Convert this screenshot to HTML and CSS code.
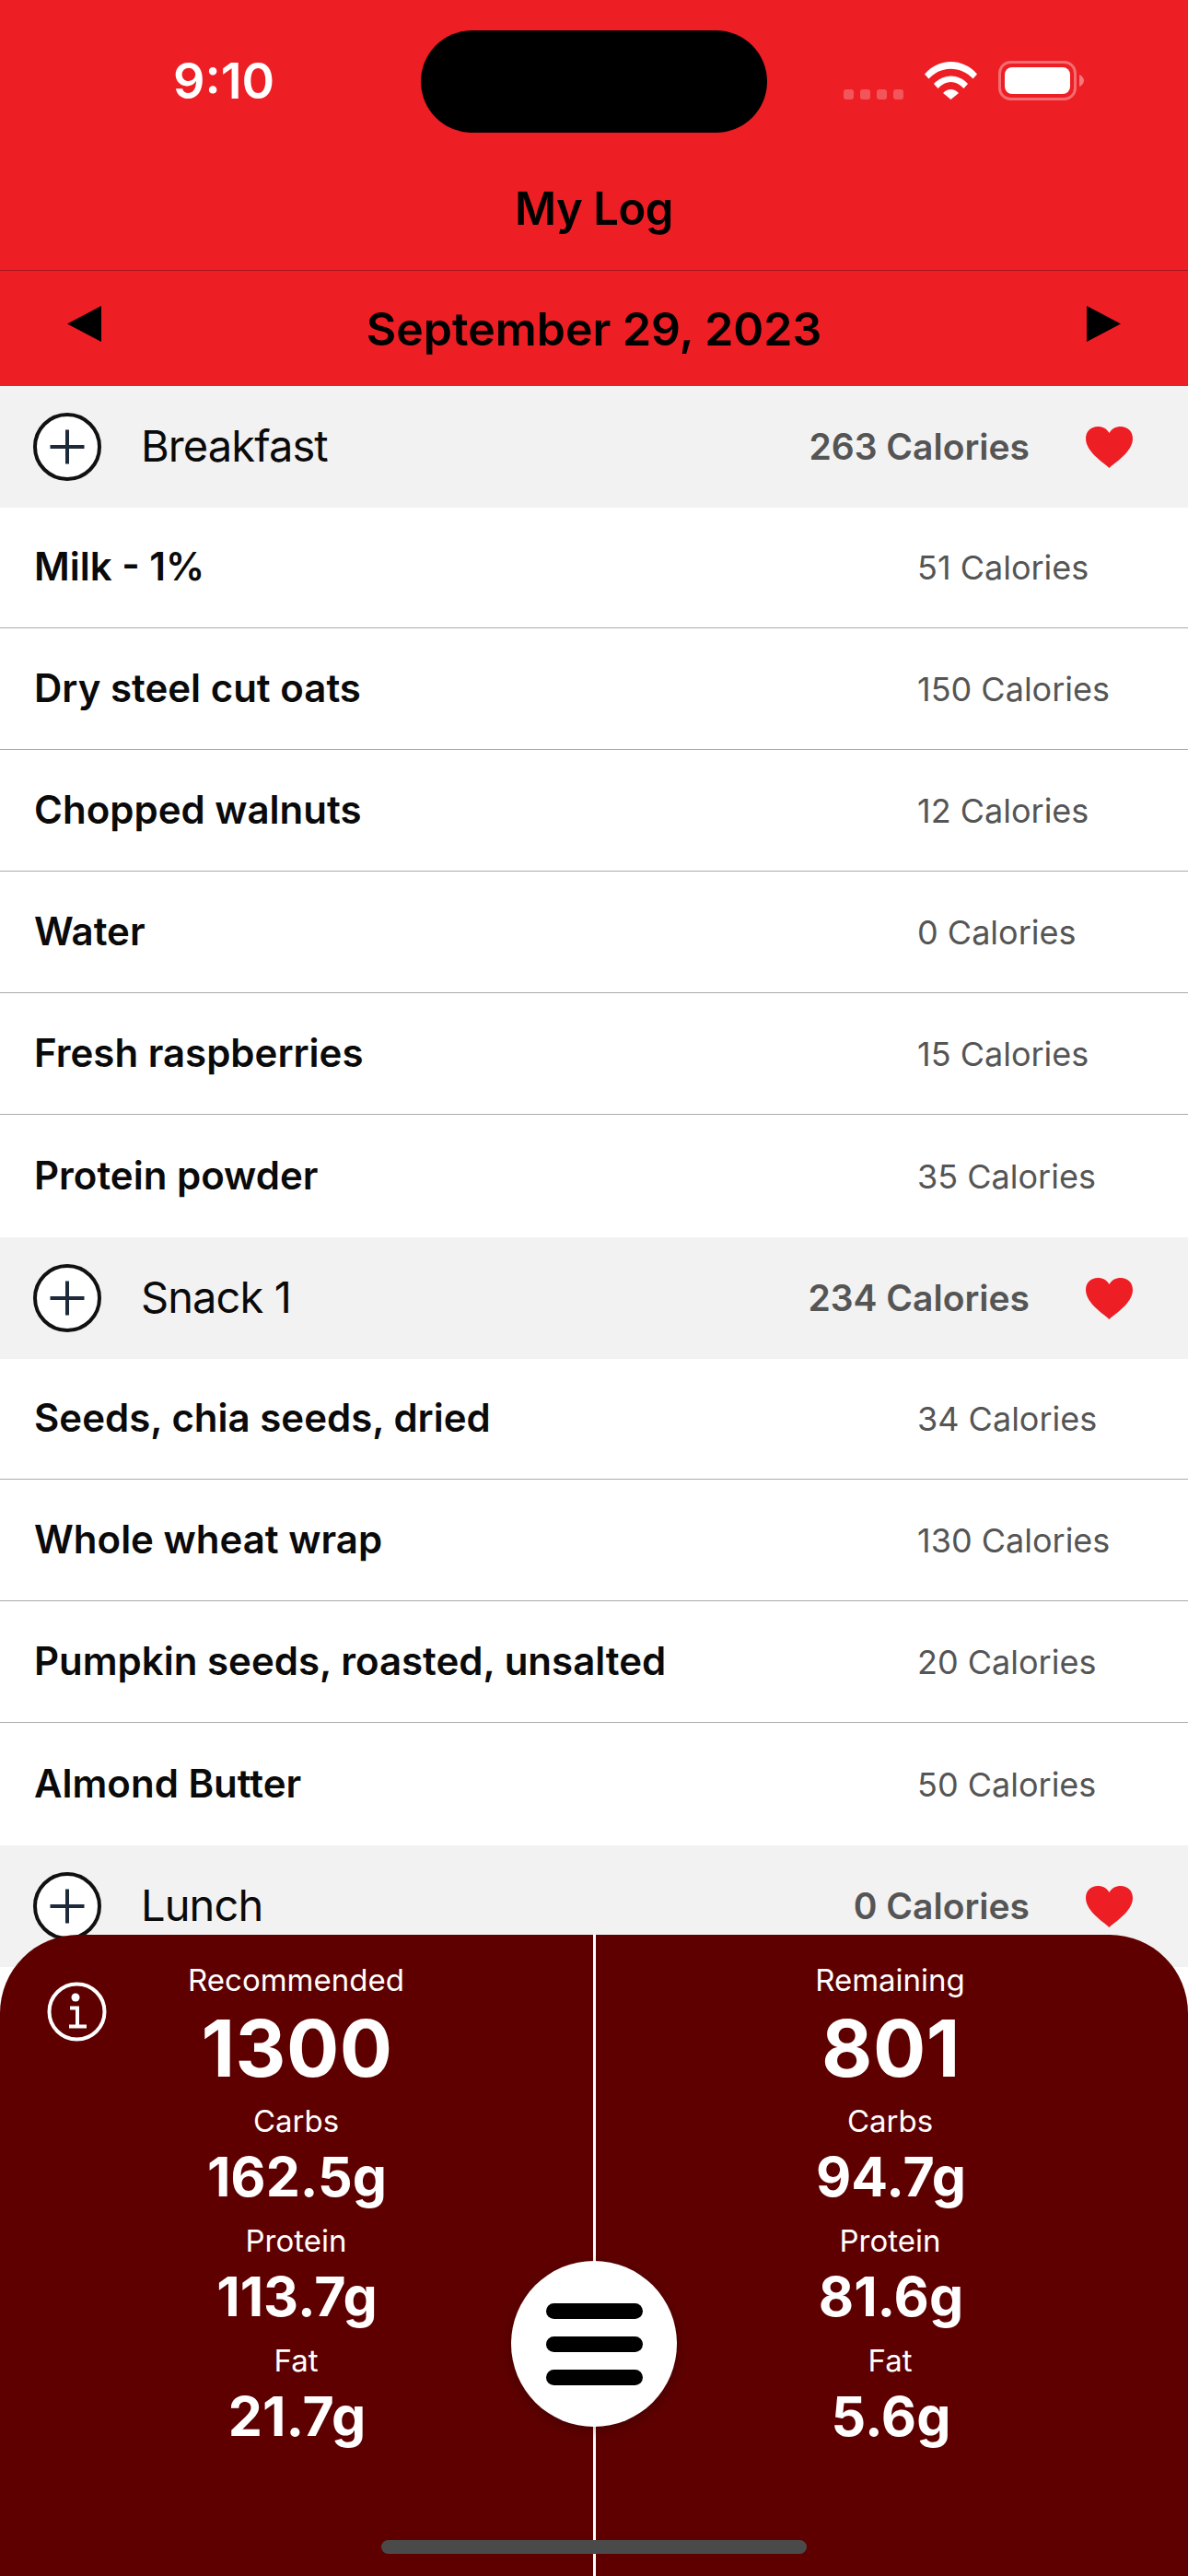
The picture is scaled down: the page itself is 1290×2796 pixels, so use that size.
FILE: index.html
```html
<!DOCTYPE html>
<html lang="en">
<head>
<meta charset="utf-8">
<title>My Log</title>
<link rel="stylesheet" href="styles.css">
</head>
<body>
<div class="screen">
  <header class="top">
    <div class="status">
      <div class="time">9:10</div>
      <div class="island"></div>
      <div class="sysicons">
        <div class="dots"><i></i><i></i><i></i><i></i></div>
        <svg class="wifi" viewBox="0 0 57 41"><path d="M0 13.5 C15-4.5 42-4.5 57 13.500 L52.500 18.500 C39.500 4 17.500 4 4.500 18.500Z M10 24 C20 12.500 37 12.500 47 24 L42.500 29 C34 19.500 23 19.500 14.500 29Z M20 34 C25 28.500 32 28.500 37 34 L28.500 41Z" fill="#fff"/></svg>
        <svg class="battery" viewBox="0 0 93 43"><rect x="1.500" y="1.500" width="82" height="40" rx="12" fill="none" stroke="#fff" stroke-opacity=".35" stroke-width="3"/><rect x="7" y="7" width="71" height="29" rx="8" fill="#fff"/><path d="M88 15 C91 16 93 19 93 21.500 C93 24 91 27 88 28Z" fill="#fff" fill-opacity=".4"/></svg>
      </div>
    </div>
    <h1 class="title">My Log</h1>
    <div class="datebar">
      <svg class="arrow" viewBox="0 0 37 39"><path d="M37 0V39L0 19.500Z"/></svg>
      <div class="date">September 29, 2023</div>
      <svg class="arrow" viewBox="0 0 37 39"><path d="M0 0V39L37 19.500Z"/></svg>
    </div>
  </header>

  <main class="log">
    <section>
      <div class="meal">
        <svg class="plus" viewBox="0 0 74 74"><circle cx="37" cy="37" r="35" fill="#fff" stroke="#111" stroke-width="4"/><path d="M18.500 37H55.500M37 18.500V55.500" stroke="#1d2a3a" stroke-width="4"/></svg>
        <span class="meal-name">Breakfast</span>
        <span class="meal-cal">263 Calories</span>
        <svg class="heart" viewBox="0 0 51 45"><path d="M25.500 45C21 40 0 28 0 13 C0 5 6 0 13 0 C18.500 0 23 2.500 25.500 7 C28 2.500 32.500 0 38 0 C45 0 51 5 51 13 C51 28 30 40 25.500 45Z"/></svg>
      </div>
      <div class="row"><span class="food">Milk - 1%</span><span class="cal">51 Calories</span></div>
      <div class="row"><span class="food">Dry steel cut oats</span><span class="cal">150 Calories</span></div>
      <div class="row"><span class="food">Chopped walnuts</span><span class="cal">12 Calories</span></div>
      <div class="row"><span class="food">Water</span><span class="cal">0 Calories</span></div>
      <div class="row"><span class="food">Fresh raspberries</span><span class="cal">15 Calories</span></div>
      <div class="row last"><span class="food">Protein powder</span><span class="cal">35 Calories</span></div>
    </section>
    <section>
      <div class="meal">
        <svg class="plus" viewBox="0 0 74 74"><circle cx="37" cy="37" r="35" fill="#fff" stroke="#111" stroke-width="4"/><path d="M18.500 37H55.500M37 18.500V55.500" stroke="#1d2a3a" stroke-width="4"/></svg>
        <span class="meal-name">Snack 1</span>
        <span class="meal-cal">234 Calories</span>
        <svg class="heart" viewBox="0 0 51 45"><path d="M25.500 45C21 40 0 28 0 13 C0 5 6 0 13 0 C18.500 0 23 2.500 25.500 7 C28 2.500 32.500 0 38 0 C45 0 51 5 51 13 C51 28 30 40 25.500 45Z"/></svg>
      </div>
      <div class="row"><span class="food">Seeds, chia seeds, dried</span><span class="cal">34 Calories</span></div>
      <div class="row"><span class="food">Whole wheat wrap</span><span class="cal">130 Calories</span></div>
      <div class="row"><span class="food">Pumpkin seeds, roasted, unsalted</span><span class="cal">20 Calories</span></div>
      <div class="row last"><span class="food">Almond Butter</span><span class="cal">50 Calories</span></div>
    </section>
    <section>
      <div class="meal">
        <svg class="plus" viewBox="0 0 74 74"><circle cx="37" cy="37" r="35" fill="#fff" stroke="#111" stroke-width="4"/><path d="M18.500 37H55.500M37 18.500V55.500" stroke="#1d2a3a" stroke-width="4"/></svg>
        <span class="meal-name">Lunch</span>
        <span class="meal-cal">0 Calories</span>
        <svg class="heart" viewBox="0 0 51 45"><path d="M25.500 45C21 40 0 28 0 13 C0 5 6 0 13 0 C18.500 0 23 2.500 25.500 7 C28 2.500 32.500 0 38 0 C45 0 51 5 51 13 C51 28 30 40 25.500 45Z"/></svg>
      </div>
    </section>
  </main>

  <aside class="panel">
    <div class="col">
      <div class="label">Recommended</div>
      <div class="big">1300</div>
      <div class="label">Carbs</div>
      <div class="value">162.5g</div>
      <div class="label">Protein</div>
      <div class="value">113.7g</div>
      <div class="label">Fat</div>
      <div class="value">21.7g</div>
    </div>
    <div class="col right">
      <div class="label">Remaining</div>
      <div class="big">801</div>
      <div class="label">Carbs</div>
      <div class="value">94.7g</div>
      <div class="label">Protein</div>
      <div class="value">81.6g</div>
      <div class="label">Fat</div>
      <div class="value">5.6g</div>
    </div>
    <svg class="info" viewBox="0 0 66 66"><circle cx="32.500" cy="32.500" r="30" fill="none" stroke="#fff" stroke-width="4"/><circle cx="31" cy="17" r="4.500" fill="#fff"/><path d="M25 28.500H33V48.500M24 48.500H43" fill="none" stroke="#fff" stroke-width="4"/></svg>
    <button class="menu" type="button" aria-label="Menu"><i></i><i></i><i></i></button>
    <div class="home"></div>
  </aside>
</div>
</body>
</html>
```
FILE: styles.css
```css
* { box-sizing: border-box; }
html, body { margin: 0; padding: 0; }
body { font-family: Inter, "Liberation Sans", sans-serif; background: #fff; }
.screen { position: relative; width: 1290px; height: 2796px; overflow: hidden; }

.top { background: #ee1e25; color: #000; }
.status { display: grid; grid-template-columns: 457px 376px 1fr; height: 160px; padding-top: 33px; }
.time { padding: 19px 0 0 188px; color: #fff; font-size: 54px; line-height: 72px; font-weight: 600; }
.island { height: 111px; background: #000; border-radius: 56px; }
.sysicons { display: flex; align-items: flex-end; height: 75px; padding-left: 83px; }
.dots { display: flex; gap: 7px; margin-right: 23px; }
.dots i { width: 11px; height: 11px; border-radius: 3px; background: rgba(255,255,255,.25); }
.wifi { width: 57px; height: 41px; margin-right: 23px; }
.battery { width: 93px; height: 43px; margin-bottom: -1px; }
.title { margin: 0; height: 134px; display: flex; align-items: center; justify-content: center; border-bottom: 1px solid #a8141a; font-size: 49px; font-weight: 600; letter-spacing: -.5px; }
.datebar { display: flex; align-items: center; justify-content: space-between; height: 125px; padding: 0 73px 10px; }
.date { font-size: 50px; font-weight: 600; line-height: 60px; padding-top: 10px; }
.arrow { width: 37px; height: 39px; fill: #000; }

.meal { display: flex; align-items: center; height: 132px; padding: 0 60px 0 36px; background: #f2f2f2; }
.plus { width: 74px; height: 74px; flex: none; }
.meal-name { margin-left: 43px; font-size: 47px; letter-spacing: -.9px; color: #0a0a0a; flex: 1; padding-bottom: 3px; }
.meal-cal { font-size: 39px; font-weight: 600; color: #555; white-space: nowrap; margin-right: 61px; padding-bottom: 2px; }
.heart { width: 51px; height: 45px; fill: #ee1e25; flex: none; }
.row { display: flex; align-items: center; justify-content: space-between; height: 131px; margin-bottom: 1px; padding: 0 0 3px 37px; border-bottom: 1px solid #ababab; background: #fff; }
.row.last { height: 132px; margin-bottom: 0; border-bottom: 0; }
.food { font-size: 42px; font-weight: 600; color: #0a0a0a; }
.cal { width: 294px; font-size: 36px; color: #555; padding-top: 3px; }

.panel { position: absolute; left: 0; right: 0; bottom: 0; height: 696px; display: grid; grid-template-columns: 1fr 1fr; background: #5e0000; border-radius: 85px 85px 0 0; color: #fff; }
.panel::before { content: ""; position: absolute; left: 644px; top: 0; bottom: 0; width: 3px; background: #fff; }
.col { text-align: center; padding-top: 27px; }
.label { font-size: 33px; line-height: 44px; padding-right: 2px; }
.big { font-size: 85px; font-weight: 700; letter-spacing: .5px; line-height: 106px; margin-bottom: 3px; }
.value { font-size: 59px; font-weight: 700; line-height: 78px; margin-bottom: 8px; }
.info { position: absolute; left: 51px; top: 51px; width: 66px; height: 66px; }
.menu { position: absolute; left: 555px; top: 354px; width: 180px; height: 180px; padding: 0; border: 0; border-radius: 50%; background: #fff; box-shadow: 0 4px 14px rgba(0,0,0,.25); display: flex; flex-direction: column; align-items: center; justify-content: center; gap: 19px; }
.menu i { display: block; width: 105px; height: 17px; border-radius: 9px; background: #000; }
.home { position: absolute; left: 414px; top: 657px; width: 462px; height: 15px; border-radius: 8px; background: #4a4a4a; }
```
